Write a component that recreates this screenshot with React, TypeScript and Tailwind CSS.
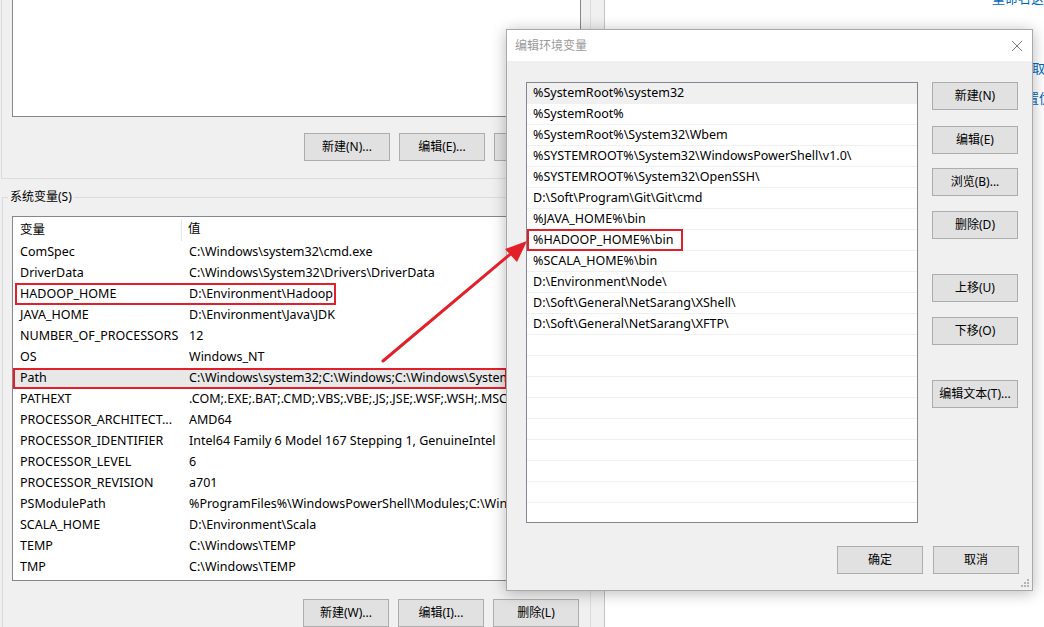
import React from 'react';

const sysVars: [string, string][] = [
  ['ComSpec', 'C:\\Windows\\system32\\cmd.exe'],
  ['DriverData', 'C:\\Windows\\System32\\Drivers\\DriverData'],
  ['HADOOP_HOME', 'D:\\Environment\\Hadoop'],
  ['JAVA_HOME', 'D:\\Environment\\Java\\JDK'],
  ['NUMBER_OF_PROCESSORS', '12'],
  ['OS', 'Windows_NT'],
  ['Path', 'C:\\Windows\\system32;C:\\Windows;C:\\Windows\\System32\\Wbem;C:\\Windows\\System32\\WindowsPowerShell\\v1.0\\'],
  ['PATHEXT', '.COM;.EXE;.BAT;.CMD;.VBS;.VBE;.JS;.JSE;.WSF;.WSH;.MSC'],
  ['PROCESSOR_ARCHITECT...', 'AMD64'],
  ['PROCESSOR_IDENTIFIER', 'Intel64 Family 6 Model 167 Stepping 1, GenuineIntel'],
  ['PROCESSOR_LEVEL', '6'],
  ['PROCESSOR_REVISION', 'a701'],
  ['PSModulePath', '%ProgramFiles%\\WindowsPowerShell\\Modules;C:\\Windows\\system32\\WindowsPowerShell'],
  ['SCALA_HOME', 'D:\\Environment\\Scala'],
  ['TEMP', 'C:\\Windows\\TEMP'],
  ['TMP', 'C:\\Windows\\TEMP'],
];

const pathItems = [
  '%SystemRoot%\\system32',
  '%SystemRoot%',
  '%SystemRoot%\\System32\\Wbem',
  '%SYSTEMROOT%\\System32\\WindowsPowerShell\\v1.0\\',
  '%SYSTEMROOT%\\System32\\OpenSSH\\',
  'D:\\Soft\\Program\\Git\\Git\\cmd',
  '%JAVA_HOME%\\bin',
  '%HADOOP_HOME%\\bin',
  '%SCALA_HOME%\\bin',
  'D:\\Environment\\Node\\',
  'D:\\Soft\\General\\NetSarang\\XShell\\',
  'D:\\Soft\\General\\NetSarang\\XFTP\\',
];

function WinButton({ label, className = '' }: { label: string; className?: string }) {
  return (
    <div
      className={`flex h-[28px] w-[86px] shrink-0 items-center justify-center border border-[#adadad] bg-[#e1e1e1] text-[12px] text-black ${className}`}
    >
      {label}
    </div>
  );
}

export default function App() {
  return (
    <div className="relative flex h-[627px] w-[1044px] overflow-hidden bg-white font-['Noto_Sans','Noto_Sans_CJK_SC',sans-serif] text-[12.5px] text-black">
      {/* Environment variables window (behind) */}
      <div className="flex h-full w-[605px] shrink-0 flex-col border-r border-[#c4c4c4] bg-[#f0f0f0]">
        {/* User variables group */}
        <div className="ml-[1px] flex h-[179px] w-[590px] flex-col border-b border-l border-r border-[#dcdcdc]">
          <div className="ml-[10px] h-[117px] w-[569px] border-b border-l border-r border-[#828790] bg-white" />
          <div className="ml-[302px] mt-[16px] flex gap-[9px]">
            <WinButton label="新建(N)..." />
            <WinButton label="编辑(E)..." />
            <WinButton label="删除(D)" />
          </div>
        </div>

        {/* System variables group */}
        <div className="ml-[2px] mt-[18px] flex w-[589px] flex-1 flex-col border-l border-r border-t border-[#dcdcdc]">
          <div className="-mt-[9px] ml-[5px] w-fit bg-[#f0f0f0] px-[2px] text-[12px] leading-[16px]">系统变量(S)</div>
          <div className="ml-[9px] mt-[11px] h-[365px] w-[569px] overflow-hidden border border-[#828790] bg-white">
            <div className="flex h-[25px] items-center">
              <div className="h-[22px] w-[169px] shrink-0 border-r border-[#e5e5e5] pl-[7px] leading-[22px]">变量</div>
              <div className="pl-[6px]">值</div>
            </div>
            {sysVars.map(([name, value], i) => (
              <div
                key={name}
                className={`relative flex h-[21px] items-center whitespace-nowrap ${name === 'Path' ? 'bg-[#e8e8e8]' : ''}`}
              >
                <div className="w-[176px] shrink-0 pl-[7px]">{name}</div>
                <div>{value}</div>
                {i === 2 && (
                  <div className="absolute left-[2px] top-[-1px] h-[22px] w-[321px] border-2 border-[#e3202a]" />
                )}
                {name === 'Path' && (
                  <div className="absolute left-0 top-0 h-[21px] w-[494px] border-2 border-[#e3202a]" />
                )}
              </div>
            ))}
          </div>
          <div className="ml-[300px] mt-[18px] flex gap-[9px]">
            <WinButton label="新建(W)..." />
            <WinButton label="编辑(I)..." />
            <WinButton label="删除(L)" />
          </div>
        </div>
      </div>

      {/* Settings page behind, right side */}
      <div className="flex flex-1 flex-col whitespace-nowrap text-[13px] leading-[18px] text-[#0067c0]">
        <div className="-mt-[11px] ml-[387px]">重命名这台电脑(高级)</div>
        <div className="ml-[414px] mt-[52px]">获取帮助</div>
        <div className="ml-[408px] mt-[12px]">配置优化</div>
      </div>

      {/* Edit environment variable dialog */}
      <div className="absolute left-[506px] top-[29px] flex h-[562px] w-[527px] flex-col border border-[#a9a9a9] bg-[#f0f0f0] shadow-[0_2px_14px_rgba(0,0,0,0.28)]">
        <div className="flex h-[31px] items-center justify-between bg-white pl-[8px] pr-[9px]">
          <span className="text-[12px] text-[#9a9a9a]">编辑环境变量</span>
          <svg width="12" height="12" viewBox="0 0 12 12" className="text-[#7a7a7a]">
            <path d="M1 1 L11 11 M11 1 L1 11" stroke="currentColor" strokeWidth="1" />
          </svg>
        </div>
        <div className="flex pl-[19px] pt-[21px]">
          <div className="h-[441px] w-[392px] overflow-hidden border border-[#828790] bg-white">
            {Array.from({ length: 21 }).map((_, i) => (
              <div
                key={i}
                className={`relative flex h-[21px] items-center whitespace-nowrap border-b border-[#f0f0f0] pl-[6px] ${i === 0 ? 'bg-[#f0f0f0]' : ''}`}
              >
                {pathItems[i] ?? ''}
                {i === 7 && (
                  <div className="absolute left-0 top-[-1px] h-[22px] w-[156px] border-2 border-[#e3202a]" />
                )}
              </div>
            ))}
          </div>
          <div className="ml-[14px] flex flex-col">
            <WinButton label="新建(N)" />
            <WinButton label="编辑(E)" className="mt-[16px]" />
            <WinButton label="浏览(B)..." className="mt-[14px]" />
            <WinButton label="删除(D)" className="mt-[15px]" />
            <WinButton label="上移(U)" className="mt-[35px]" />
            <WinButton label="下移(O)" className="mt-[15px]" />
            <WinButton label="编辑文本(T)..." className="mt-[35px]" />
          </div>
        </div>
        <div className="mt-[23px] flex justify-end gap-[10px] pr-[13px]">
          <WinButton label="确定" />
          <WinButton label="取消" />
        </div>
        {/* resize grip */}
        <svg width="8" height="8" viewBox="0 0 8 8" className="absolute bottom-[3px] right-[3px] text-[#b4b4b4]">
          <rect x="6" y="0" width="2" height="2" fill="currentColor" />
          <rect x="3" y="3" width="2" height="2" fill="currentColor" />
          <rect x="6" y="3" width="2" height="2" fill="currentColor" />
          <rect x="0" y="6" width="2" height="2" fill="currentColor" />
          <rect x="3" y="6" width="2" height="2" fill="currentColor" />
          <rect x="6" y="6" width="2" height="2" fill="currentColor" />
        </svg>
      </div>

      {/* Annotation arrow */}
      <svg className="pointer-events-none absolute left-0 top-0" width="1044" height="627">
        <line x1="383" y1="361" x2="514" y2="251" stroke="#e3202a" strokeWidth="3" strokeLinecap="round" />
        <polygon points="527,241 505,249 517,262" fill="#e3202a" />
      </svg>
    </div>
  );
}
